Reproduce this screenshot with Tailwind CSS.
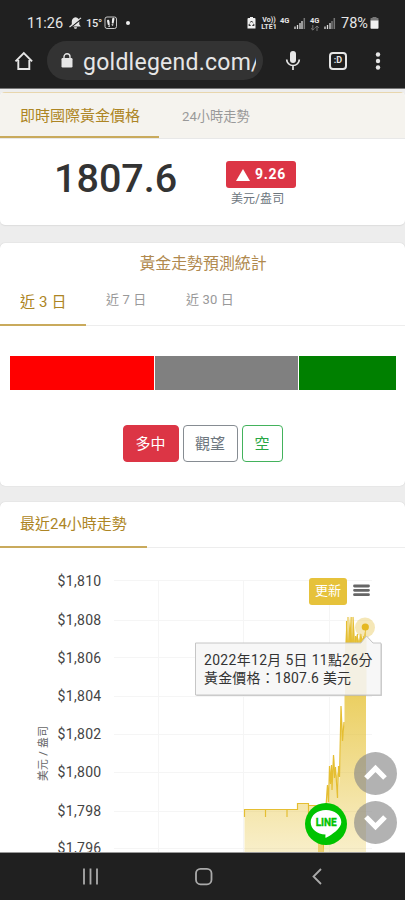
<!DOCTYPE html>
<html lang="zh-Hant">
<head>
<meta charset="utf-8">
<meta name="viewport" content="width=device-width, initial-scale=1">
<title>goldlegend.com</title>
<script src="https://cdn.jsdelivr.net/npm/@tailwindcss/browser@4"></script>
</head>
<body class="w-[405px] h-[900px] overflow-hidden bg-[#ededed] font-[Roboto,'Noto_Sans_CJK_TC',sans-serif] flex flex-col">

<header class="h-[89px] shrink-0 bg-[#202020] text-[#e6e6e6] border-b border-[#777]">
  <div class="h-[41px] pt-[13px] pl-[27px] flex items-start">
    <span class="text-[14.5px] leading-[22px] w-[42px]">11:26</span>
    <svg class="mt-[3px] w-[13px] h-[14px]" viewBox="0 0 13 14"><path d="M6.5 1.2c2.6.5 3.800 2.200 3.800 4.200v3l1.600 2H1.400L2.800 8.400v-3C2.800 3.400 4.200 1.600 6.500 1.200z" fill="#e6e6e6"/><path d="M5 11.2h3c0 2-3 2-3 0z" fill="#e6e6e6"/><path d="M1.300 11.700 12.300 2.900" stroke="#202020" stroke-width="1.300"/><path d="M.5 11 12 1.900" stroke="#e6e6e6" stroke-width="1.200"/></svg>
    <span class="ml-[4px] text-[11px] leading-[21px] font-medium w-[18px] tracking-[-0.3px]">15°</span>
    <svg class="mt-[3px] w-[14px] h-[14px]" viewBox="0 0 14 14"><rect x="1" y="1" width="11.5" height="11.5" rx="2" fill="none" stroke="#d8d8d8" stroke-width=".9"/><path d="M3 5c0-1.500 2-1.700 2.400 0l.4 3.700c-1 .5-1.500.4-2 0zM8.100 3c.3-1.500 2.600-1.600 2.300.2l-.8 4.200c-.8.3-1.300.2-1.800-.2zM4.200 9.700l1.800-.4c.2 2.200-1.500 2.500-1.800.4zM7.700 8.100l1.800.4c-.4 1.900-2.100 1.500-1.800-.4z" fill="#eee"/></svg>
    <i class="block ml-[8px] mt-[8px] w-[4px] h-[4px] rounded-full bg-[#eee]"></i>
    <svg class="ml-[117px] mt-[3px] w-[9px] h-[14px]" viewBox="0 0 9 14"><path d="M3 1h3v1h1.500q1 0 1 1v9.500h-8V3q0-1 1-1H3z" fill="#f0f0f0"/><path d="M3.300 6.500 4.500 5 5.700 6.500M6.600 7.800l.5 1.600H5.300M3.700 9.400H1.900L2.400 7.800" stroke="#202020" fill="none" stroke-width="1"/></svg>
    <div class="ml-[5px] mt-[4px] w-[16px] text-[7px] leading-[6.500px] font-bold text-center"><div>Vo))</div><div>LTE1</div></div>
    <span class="ml-[3px] mt-[3px] w-[10px] text-[7.500px] leading-[9px] font-bold">4G</span>
    <svg class="ml-[4px] mt-[4px] w-[12px] h-[13px]" viewBox="0 0 12 13"><path d="M1 12V9.500M3.500 12V8M6 12V6M8 12V4" stroke="#ddd" stroke-width="1.300"/><path d="M10.300 12V1" stroke="#777" stroke-width="1.500"/></svg>
    <div class="ml-[4px] mt-[3px] w-[10px] text-[7.500px] leading-[9px] font-bold flex flex-col">4G<svg class="w-[10px] h-[6px]" viewBox="0 0 10 6"><path d="M2.800 0v5M1 3.300 2.800 5 4.600 3.300M7 6V1M5.200 2.700 7 1l1.800 1.700" fill="none" stroke="#777"/></svg></div>
    <svg class="ml-[4px] mt-[4px] w-[12px] h-[13px]" viewBox="0 0 12 13"><path d="M1 12V9.500M3.500 12V8M6 12V6" stroke="#ddd" stroke-width="1.300"/><path d="M8 12V4M10.300 12V1" stroke="#777" stroke-width="1.500"/></svg>
    <span class="ml-[5px] text-[14.500px] leading-[22px] w-[28px] whitespace-nowrap">78%</span>
    <svg class="ml-[1px] mt-[3px] w-[9px] h-[14px]" viewBox="0 0 9 14"><path d="M2.500 1h4v1H8q.5 0 .5.5V5H.5V2.500Q.5 2 1 2h1.500z" fill="#777"/><path d="M.5 4.500h8V12q0 .7-.7.700H1.200Q.5 12.700.5 12z" fill="#f3f3f3"/></svg>
  </div>
  <div class="h-[39px] pl-[14px] flex items-center">
    <svg class="w-[20px] h-[20px]" viewBox="0 0 20 20"><path d="M1.500 10.300 9.800 2l8.300 8.300M4.300 9v9h11V9" fill="none" stroke="#e6e6e6" stroke-width="1.900"/></svg>
    <div class="ml-[13px] w-[216px] h-[39px] rounded-full bg-[#333] flex items-center overflow-hidden">
      <svg class="ml-[14px] w-[12px] h-[15px] shrink-0" viewBox="0 0 12 15"><rect x=".5" y="5" width="11" height="9.500" rx="1.200" fill="#e6e6e6"/><path d="M3 6V3.800a3 3 0 0 1 6 0V6" fill="none" stroke="#e6e6e6" stroke-width="1.400"/></svg>
      <div class="ml-[10px] w-[173px] overflow-hidden whitespace-nowrap text-[23px] leading-[34px] pt-[4px] tracking-[0.250px]">goldlegend.com/</div>
    </div>
    <svg class="ml-[22px] w-[16px] h-[22px]" viewBox="0 0 16 22"><rect x="5" y="1" width="6" height="12" rx="3" fill="#e6e6e6"/><path d="M1.700 9.500a6.300 6 0 0 0 12.600 0M8 15.500V20" fill="none" stroke="#e6e6e6" stroke-width="1.700"/></svg>
    <div class="ml-[28px] w-[18px] h-[18px] rounded-[4px] border-2 border-[#e6e6e6] text-[9px] leading-[13px] font-bold text-center">:D</div>
    <svg class="ml-[28px] w-[6px] h-[20px]" viewBox="0 0 6 20"><g fill="#e6e6e6"><circle cx="3" cy="3.500" r="2.200"/><circle cx="3" cy="10" r="2.200"/><circle cx="3" cy="16.500" r="2.200"/></g></svg>
  </div>
</header>

<main class="h-[764px] shrink-0 overflow-hidden pt-[3px] border-b border-[#999]">
  <section class="h-[133px] rounded-[5px] bg-white shadow-[0_1px_1px_#ddd] overflow-hidden">
    <div class="h-[47px] flex bg-[#f5f3ee] border-t border-[#e8d6ad] border-b border-b-[#e8e8e8]">
      <div class="w-[159px] h-[45px] pl-[20px] text-[15px] leading-[46px] text-[#ad8524] border-b-2 border-[#c9aa5c]">即時國際黃金價格</div>
      <div class="pl-[23px] text-[13.200px] leading-[47px] text-[#999]">24小時走勢</div>
    </div>
    <div class="flex">
      <div class="w-[226px] pl-[54px] pt-[13px] text-[39.500px] leading-[54px] font-medium text-[#333]">1807.6</div>
      <div class="pt-[22px] w-[70px]">
        <div class="h-[27px] rounded-[3px] bg-[#dc3545] text-white flex items-center pl-[10px]">
          <svg class="w-[14px] h-[12px]" viewBox="0 0 14 12"><path d="M7 0 14 12H0z" fill="#fff"/></svg>
          <span class="ml-[5px] text-[14px] font-bold tracking-[0.700px]">9.26</span>
        </div>
        <div class="pl-[5px] text-[12px] leading-[23px] text-[#6c757d] tracking-[0.050px]">美元/盎司</div>
      </div>
    </div>
  </section>

  <section class="mt-[18px] h-[243px] rounded-[5px] bg-white shadow-[0_0_1px_#bbb]">
    <h2 class="text-center text-[15.900px] leading-[42px] h-[36px] pl-[1px] text-[#b0894e]">黃金走勢預測統計</h2>
    <div class="h-[47px] flex border-b border-[#ededed] text-[#999] text-[13px] leading-[42px] tracking-[0.150px]">
      <div class="w-[86px] h-[47px] pl-[20px] text-[15px] leading-[46px] text-[#ad8524] border-b-2 border-[#c9aa5c]">近 3 日</div>
      <div class="pl-[20px] w-[100px]">近 7 日</div>
      <div>近 30 日</div>
    </div>
    <div class="mt-[30px] mx-[9px] h-[34px] pl-[1px] flex gap-px">
      <div class="w-[144px] bg-[#ff0000]"></div>
      <div class="w-[144px] bg-[#808080]"></div>
      <div class="w-[97px] bg-[#008000]"></div>
    </div>
    <div class="mt-[35px] flex justify-center gap-[4px] text-[15px] leading-[36px] text-center">
      <div class="w-[56px] h-[37px] rounded-[4px] bg-[#dc3545] text-white border border-[#dc3545]">多中</div>
      <div class="w-[55px] h-[37px] rounded-[4px] text-[#6c757d] border border-[#868c92]">觀望</div>
      <div class="w-[41px] h-[37px] rounded-[4px] text-[#28a745] border border-[#43b25c]">空</div>
    </div>
  </section>

  <section class="relative mt-[16px] rounded-t-[5px] bg-white shadow-[0_0_1px_#bbb]">
    <div class="h-[46px] border-b border-[#ededed]">
      <div class="w-[147px] h-[46px] pl-[20px] text-[15px] leading-[44px] text-[#ad8524] border-b-2 border-[#c9aa5c]">最近24小時走勢</div>
    </div>
    <svg class="block w-[405px] h-[304px]" viewBox="0 548 405 304">
      <defs><linearGradient id="gold" gradientUnits="userSpaceOnUse" x1="0" y1="620" x2="0" y2="870"><stop offset="0" stop-color="#e5c030"/><stop offset="1" stop-color="#e5c030" stop-opacity=".2"/></linearGradient></defs>
      <path d="M114 580.500h258M114 620.500h258M114 657.500h258M114 696.500h258M114 734.500h258M114 772.500h258M114 811.500h258M114 848.500h258M158.500 580v272M243.500 580v272M329.500 580v272" stroke="#f5f5f5" fill="none"/>
      <g font-size="14" fill="#444" text-anchor="end" letter-spacing=".3">
        <text x="101.500" y="586">$1,810</text><text x="101.500" y="625">$1,808</text><text x="101.500" y="663">$1,806</text><text x="101.500" y="701">$1,804</text><text x="101.500" y="739">$1,802</text><text x="101.500" y="777">$1,800</text><text x="101.500" y="816">$1,798</text><text x="101.500" y="853">$1,796</text>
      </g>
      <text transform="translate(47 781) rotate(-90)" font-size="10.800" fill="#666" textLength="55">美元 / 盎司</text>
      <path d="M244.500 852V809.500H297.500V803.500H308.500V805.500H326L327 785 329 800 330 767 332 785 334 755 336 776 338 772 338.500 796 340 768 341 706 343 735 344.500 722V660L346.500 620 348 642 350 616 352 640 353.500 616 355 641 357 634 359 641 360 633 363 639 366 627V852z" fill="url(#gold)"/>
      <path d="M244.500 817V809.500H265.500V817V809.500H287V817V809.500H297.500V803.500H308.500V815V805.500H319V852V835H321V852 830H323V852L326 806 327.500 785 328.500 802 329.500 766 330.500 784 331.500 765 332 790 333.500 755 334.500 778 335.500 767 337.500 798 338.500 766 339.500 777 341 706 342.500 741 344 722" fill="none" stroke="#e5be32" stroke-width="1.200"/>
      <path d="M346.500 645V621M348 645V617M350 645V630M351.200 645V617M353 645V617M355.500 645V636M357.500 645V634M361 645V634M363.500 645V636M365.500 645V627" fill="none" stroke="#e5be32" stroke-width="1.100"/>
      <circle cx="365" cy="627.500" r="10" fill="#ecd070" fill-opacity=".5"/><circle cx="365.300" cy="627" r="3.600" fill="#e5b820"/>
      <path d="M354.500 586h14M354.500 590.300h14M354.500 594.700h14" stroke="#666" stroke-width="2.800" stroke-linecap="round"/>
      <path d="M195.500 643H361L366.500 636 373 643H381V695H195.500z" fill="#aaa" opacity=".55" transform="translate(1 1)"/>
      <path d="M195.500 643H361L366.500 636 373 643H381V695H195.500z" fill="#f7f7f7"/>
      <path d="M345 643h16l5.500-6V695H345z" fill="#eee3bd" opacity=".35"/>
      <path d="M195.500 643H361L366.500 636 373 643H381V695H195.500z" fill="none" stroke="#c6c6c6"/>
      <g font-size="13.900" fill="#333"><text x="204" y="665" textLength="168.500">2022年12月 5日 11點26分</text><text x="204" y="683" textLength="147">黃金價格：1807.6 美元</text></g>
    </svg>
    <div class="absolute left-[309px] top-[76px] w-[38px] h-[27px] rounded-[3px] bg-[#e6c23b] text-white text-[13px] leading-[25px] text-center">更新</div>
    <svg class="absolute left-[305px] top-[301px] w-[42px] h-[42px]" viewBox="0 0 42 42"><circle cx="21" cy="21" r="21" fill="#00c300"/><path d="M21 7c8.600 0 15.300 5.400 15.300 12.300 0 6.200-9.200 12.400-15.300 15.500-.7.200-.7-.4-.5-3.300C12 31.500 5.700 26 5.700 19.300 5.700 12.400 12.400 7 21 7z" fill="#fff"/><text x="21.200" y="23.300" text-anchor="middle" font-size="11" font-weight="700" fill="#00c300" stroke="#00c300" stroke-width=".4" textLength="21" lengthAdjust="spacingAndGlyphs">LINE</text></svg>
    <div class="absolute left-[354px] top-[250px] flex flex-col gap-[6px]">
      <svg class="w-[43px] h-[43px]" viewBox="0 0 43 43"><circle cx="21.500" cy="21.500" r="21.500" fill="#888" fill-opacity=".65"/><path d="m12 26 9.500-9.500L31 26" fill="none" stroke="#fff" stroke-width="5.200"/></svg>
      <svg class="w-[43px] h-[43px]" viewBox="0 0 43 43"><circle cx="21.500" cy="21.500" r="21.500" fill="#888" fill-opacity=".65"/><path d="m12 16 9.500 9.500L31 16" fill="none" stroke="#fff" stroke-width="5.200"/></svg>
    </div>
  </section>
</main>

<nav class="h-[47px] shrink-0 bg-[#202020]">
  <svg class="block w-[405px] h-[47px]" viewBox="0 853 405 47" fill="none" stroke="#aaa" stroke-width="1.800"><path d="M84 868.500v16M90.500 868.500v16M97 868.500v16M321 869l-7.500 7.500 7.500 7.500"/><rect x="196" y="868.800" width="15.500" height="15.500" rx="4.500"/></svg>
</nav>
</body>
</html>
